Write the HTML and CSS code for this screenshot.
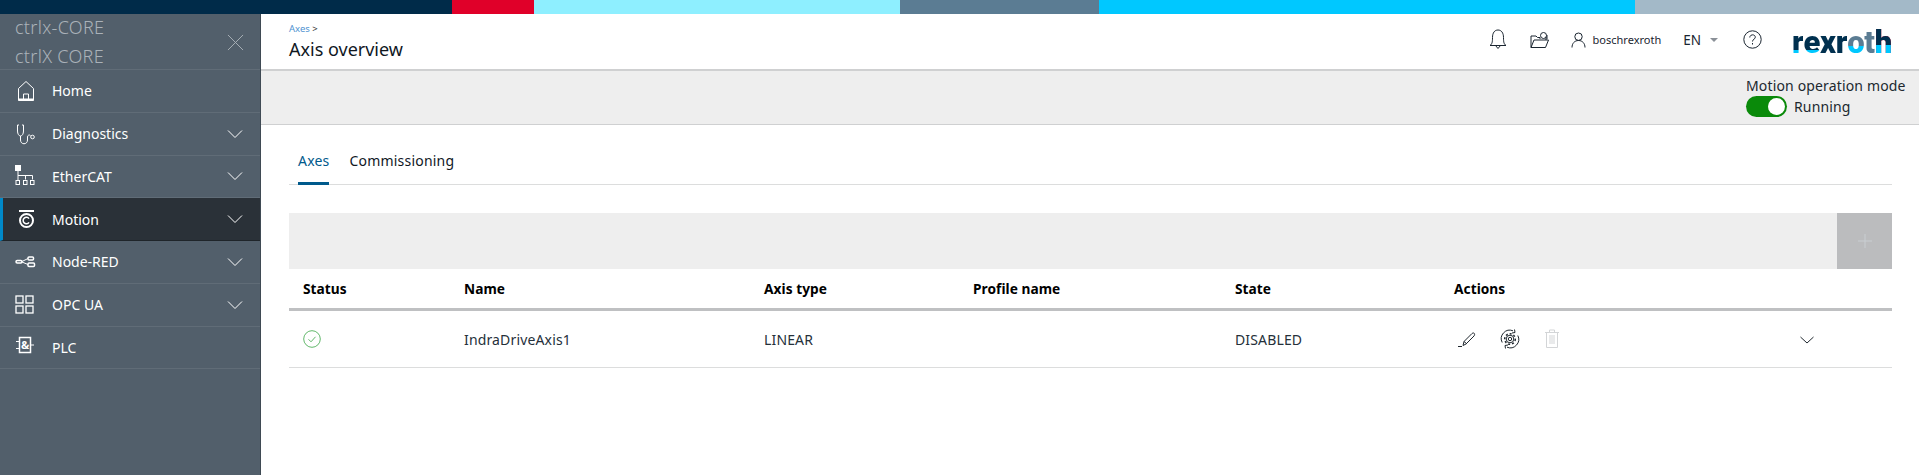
FILE: index.html
```html
<!DOCTYPE html>
<html lang="en">
<head>
<meta charset="utf-8">
<title>Axis overview</title>
<link rel="stylesheet" href="styles.css">
</head>
<body>
<div class="brandbar">
  <span class="seg s1"></span><span class="seg s2"></span><span class="seg s3"></span><span class="seg s4"></span><span class="seg s5"></span><span class="seg s6"></span>
</div>
<div class="app">
  <aside class="sidebar">
    <div class="device">
      <div class="device-names"><div>ctrlx-CORE</div><div>ctrlX CORE</div></div>
      <svg class="close" viewBox="0 0 18 18"><path d="M1 1l16 16M17 1L1 17"/></svg>
    </div>
    <nav>
      <a class="nav-item">
        <svg class="nav-icon" viewBox="0 0 22 22"><path d="M3.500 20.500V8.500L11 1.500l7.500 7v12zM8.500 20v-6h5v6"/><path class="thick" d="M3.500 19.500h15"/></svg>
        <span class="nav-label">Home</span>
      </a>
      <a class="nav-item">
        <svg class="nav-icon" viewBox="0 0 22 22"><path d="M4 2H2.500v6c0 3 1.500 5 3 5s3-2 3-5V2H7M5.500 13v4c0 5 7 5 7 0v-3c0-2 2-2.500 3-1.500"/><circle cx="17.500" cy="14" r="1.800"/></svg>
        <span class="nav-label">Diagnostics</span>
        <svg class="chev" viewBox="0 0 16 10"><path d="M1 1.500l7 7 7-7"/></svg>
      </a>
      <a class="nav-item">
        <svg class="nav-icon" viewBox="0 0 22 22"><rect class="solid" x="0.500" y="0.500" width="5" height="5"/><path d="M3 6v9M3 10.500h14.500v4M10.500 10.500v4"/><rect x="1" y="15.500" width="3.500" height="4"/><rect x="8.500" y="15.500" width="3.500" height="4"/><rect x="15.500" y="15.500" width="3.500" height="4"/></svg>
        <span class="nav-label">EtherCAT</span>
        <svg class="chev" viewBox="0 0 16 10"><path d="M1 1.500l7 7 7-7"/></svg>
      </a>
      <a class="nav-item active">
        <svg class="nav-icon" viewBox="0 0 22 22"><path class="thick" d="M4 3h15"/><circle class="thick" cx="11.500" cy="12.500" r="6.500"/><path class="mid" d="M14 10.700a3.200 3.200 0 1 0 0 3.600"/></svg>
        <span class="nav-label">Motion</span>
        <svg class="chev" viewBox="0 0 16 10"><path d="M1 1.500l7 7 7-7"/></svg>
      </a>
      <a class="nav-item">
        <svg class="nav-icon" viewBox="0 0 22 22"><rect class="mid" x="1" y="9.500" width="6" height="2.500" rx="1.200"/><path d="M7 10.500l6-3M7 11l6 2.500"/><rect class="mid" x="13" y="6" width="5.500" height="3" rx="1"/><rect class="mid" x="13" y="12" width="6.500" height="3.500" rx="1"/></svg>
        <span class="nav-label">Node-RED</span>
        <svg class="chev" viewBox="0 0 16 10"><path d="M1 1.500l7 7 7-7"/></svg>
      </a>
      <a class="nav-item">
        <svg class="nav-icon grid-ico" viewBox="0 0 22 22"><rect x="1" y="2" width="7" height="7"/><rect x="11" y="2" width="7" height="7"/><rect x="1" y="12" width="7" height="7"/><rect x="11" y="12" width="7" height="7"/></svg>
        <span class="nav-label">OPC UA</span>
        <svg class="chev" viewBox="0 0 16 10"><path d="M1 1.500l7 7 7-7"/></svg>
      </a>
      <a class="nav-item">
        <svg class="nav-icon" viewBox="0 0 22 22"><rect class="mid" x="4.500" y="1.500" width="11" height="15"/><path d="M1 5.500h3.500M1 12.500h3.500M15.500 9H19"/><text class="amp" x="10" y="12.500">&amp;</text></svg>
        <span class="nav-label">PLC</span>
      </a>
    </nav>
  </aside>
  <main class="main">
    <header class="topbar">
      <div class="titles">
        <div class="crumb"><span class="crumb-link">Axes</span> &gt;</div>
        <h1 class="title">Axis overview</h1>
      </div>
      <div class="tools">
        <svg class="tool bell" viewBox="0 0 18 21"><path d="M1 16.500c2-1.500 2.500-3 2.500-8C3.500 4 5.500 1 9 1s5.500 3 5.500 7.500c0 5 .5 6.500 2.500 8zM6.500 16.500L9 19.500l2.500-3"/></svg>
        <svg class="tool folder" viewBox="0 0 19 18"><path d="M1 16.500V5h5l1.500 1.500H10M1 16.500h14.500l3-7.500H4zM16 9V6"/><circle cx="13.500" cy="4.500" r="3"/><path d="M10 8V6.500M17 8V4"/></svg>
        <svg class="tool user" viewBox="0 0 15 16"><circle cx="7.500" cy="4.700" r="3.700"/><path d="M1 15.500c0-4 2.500-7 6.500-7s6.500 3 6.500 7"/></svg>
        <span class="username">boschrexroth</span>
        <span class="lang">EN</span>
        <span class="caret"></span>
        <svg class="tool help" viewBox="0 0 19 19"><circle cx="9.500" cy="9.500" r="8.700"/><path d="M6.800 7.500c0-3.500 5.500-3.500 5.500-.3 0 2-2.800 2-2.800 4.300M9.500 13v1.500"/></svg>
        <div class="logo"><span class="l-c">r</span><span class="l-c">e</span><span class="l-d">x</span><span class="l-d">r</span><span class="l-o">o</span><span class="l-g">t</span><span class="l-r">h</span></div>
      </div>
    </header>
    <section class="modebar">
      <div class="mode">
        <div class="mode-label">Motion operation mode</div>
        <div class="mode-row"><span class="toggle"><span class="knob"></span></span><span class="mode-state">Running</span></div>
      </div>
    </section>
    <section class="content">
      <div class="tabs">
        <span class="tab tab-on">Axes</span>
        <span class="tab">Commissioning</span>
      </div>
      <div class="toolbar">
        <button class="add"><svg viewBox="0 0 14 14"><path d="M7 0v14M0 7h14"/></svg></button>
      </div>
      <div class="grid head">
        <div>Status</div><div>Name</div><div>Axis type</div><div>Profile name</div><div>State</div><div>Actions</div>
      </div>
      <div class="grid row">
        <div><svg class="status" viewBox="0 0 18 18"><circle cx="9" cy="9" r="8.300"/><path d="M5.500 9.300l2.500 2.500 4.500-5"/></svg></div>
        <div>IndraDriveAxis1</div>
        <div>LINEAR</div>
        <div></div>
        <div>DISABLED</div>
        <div class="actions">
          <svg class="act" viewBox="0 0 20 18"><path d="M0 16.500h4"/><path d="M5 15.500l1-4 8-8c2-1.500 3.500.5 2 2.500l-8 8zM6 11.500l3 2.500"/></svg>
          <svg class="act gear" viewBox="0 0 20 20"><path d="M2.200 13.500A8.500 8.500 0 0 1 13 1.800M17.800 6.500A8.500 8.500 0 0 1 7 18.200M14.500 0.500L15 3.500 12 4M5.500 19.500L5 16.500 8 16"/><circle class="teeth" cx="10" cy="10" r="5.300"/><circle cx="10" cy="10" r="3.800"/><circle cx="10" cy="10" r="1.700"/></svg>
          <svg class="act trash" viewBox="0 0 16 19"><path d="M1 3.500h14M5.500 3.500V1h5v2.500M2.500 3.500v15h11v-15M6 6v9M8 6v9M10 6v9"/></svg>
          <svg class="expand" viewBox="0 0 14 8"><path d="M.5 1l6.500 6 6.500-6"/></svg>
        </div>
      </div>
    </section>
  </main>
</div>
</body>
</html>
```
FILE: styles.css
```css
* { box-sizing: border-box; }
html, body { margin: 0; height: 100%; overflow: hidden; }
body {
  display: flex;
  flex-direction: column;
  font-family: "Noto Sans", "Open Sans", sans-serif;
  color: #1a2530;
  background: #fff;
}
svg { fill: none; stroke: currentColor; stroke-width: 1; display: block; flex: none; }

.brandbar { display: flex; height: 14px; flex: none; }
.seg { display: block; height: 100%; }
.s1 { width: 452px; background: #002b49; }
.s2 { width: 82px; background: #e00029; }
.s3 { width: 366px; background: #8eefff; }
.s4 { width: 199px; background: #5b7c93; }
.s5 { width: 536px; background: #00c8ff; }
.s6 { flex: 1; background: #a3b9c8; }

.app { display: flex; flex: 1; min-height: 0; }

.sidebar {
  width: 261px;
  flex: none;
  background: #525f6b;
  color: #fff;
  border-right: 1px solid #3f4a54;
}
.device {
  height: 56px;
  display: flex;
  align-items: center;
  justify-content: space-between;
  padding: 0 16px 0 15px;
  border-bottom: 1px solid #606c77;
}
.device-names { font-size: 18px; line-height: 29px; font-weight: 300; letter-spacing: .3px; color: #aab2b9; }
.close { width: 17px; height: 17px; color: #aab2b9; margin-top: 1px; }

.nav-item {
  display: flex;
  align-items: center;
  height: 42.75px;
  padding-left: 15px;
  padding-right: 17px;
  font-size: 14px;
  border-bottom: 1px solid #606c77;
}
.nav-item.active {
  background: #2a3138;
  border-left: 3px solid #0089c9;
  padding-left: 12px;
  border-bottom-color: #1f252a;
}
.nav-icon { width: 22px; height: 22px; color: #fff; }
.thick { stroke-width: 2; }
.mid { stroke-width: 1.500; }
.grid-ico { stroke-width: 1.300; }
.solid { fill: #fff; }
.amp { fill: #fff; stroke: none; font-size: 11px; font-weight: 700; text-anchor: middle; font-family: "Noto Sans", sans-serif; }
.nav-label { margin-left: 15px; flex: 1; }
.chev { width: 16px; height: 10px; }

.main { flex: 1; min-width: 0; display: flex; flex-direction: column; }

.topbar {
  height: 57px;
  flex: none;
  display: flex;
  justify-content: space-between;
  padding: 0 27px 0 28px;
  border-bottom: 2px solid #cfd0d1;
}
.crumb { font-size: 9.500px; line-height: 12px; margin-top: 9px; color: #333; }
.crumb-link { color: #4f93d1; }
.title { margin: 3px 0 0; font-size: 18px; line-height: 23px; font-weight: 400; color: #10181f; }
.tools { display: flex; align-items: center; padding-bottom: 4px; color: #1a2530; }
.tool { display: block; }
.bell { width: 18px; height: 21px; margin-right: 23px; }
.folder { width: 19px; height: 18px; margin-right: 22px; }
.user { width: 15px; height: 16px; margin-right: 7px; }
.username { font-size: 11px; margin-right: 22px; }
.lang { font-size: 13.500px; margin-right: 9px; }
.caret { width: 0; height: 0; border: 4px solid transparent; border-top: 4px solid #8a9097; border-bottom: 0; margin-right: 25px; }
.help { width: 19px; height: 19px; margin-right: 30px; }
.logo { display: flex; width: 100px; margin-top: 6px; font-family: "Roboto", sans-serif; font-weight: 900; font-size: 31px; line-height: 34px; letter-spacing: -.3px; }
.logo span { -webkit-background-clip: text; background-clip: text; color: transparent; }
.l-d { background-image: linear-gradient(#00304f, #00304f); }
.l-c { background-image: linear-gradient(#00304f 72%, #00c8ff 72%); }
.l-o { background-image: linear-gradient(#5b7c93 60%, #00c8ff 60%); }
.l-g { background-image: linear-gradient(#5b7c93, #5b7c93); }
.l-r { background-image: linear-gradient(#00304f 55%, #00c8ff 55%, #00c8ff 100%), linear-gradient(#e00029, #e00029); }

.modebar {
  height: 54px;
  flex: none;
  background: #eee;
  border-bottom: 1px solid #cfd0d1;
  display: flex;
  justify-content: flex-end;
  padding-right: 14px;
}
.mode { width: 159px; padding-top: 6px; font-size: 14px; letter-spacing: .15px; line-height: 18px; color: #20282f; white-space: nowrap; }
.mode-row { display: flex; align-items: center; gap: 7px; margin-top: 1px; }
.toggle { display: flex; align-items: center; justify-content: flex-end; width: 41px; height: 21px; padding-right: 2px; border-radius: 11px; background: #0a8a0a; }
.knob { width: 17px; height: 17px; border-radius: 50%; background: #fff; }

.content { flex: 1; padding: 0 27px 0 28px; }
.tabs { display: flex; height: 60px; align-items: flex-end; gap: 20px; border-bottom: 1px solid #dcdddd; padding-left: 9px; }
.tab { font-size: 14px; letter-spacing: .2px; height: 35px; line-height: 24px; color: #10181f; }
.tab-on { color: #005a8c; border-bottom: 3px solid #005a8c; margin-bottom: -1px; height: 36px; }

.toolbar { margin-top: 28px; height: 56px; background: #eee; display: flex; justify-content: flex-end; }
.add { width: 55px; height: 56px; padding: 0; border: 0; background: #bbbcbe; display: flex; align-items: center; justify-content: center; color: #c9ced2; }
.add svg { width: 14px; height: 14px; }

.grid { display: grid; grid-template-columns: 161px 300px 209px 262px 219px 1fr; align-items: center; }
.grid > div { padding-left: 14px; }
.head { height: 42px; font-size: 13.700px; font-weight: 700; letter-spacing: .05px; color: #000; border-bottom: 3px solid #bfc0c2; }
.row { height: 57px; font-size: 14px; letter-spacing: .15px; color: #25303a; border-bottom: 1px solid #dcdddd; }
.status { width: 18px; height: 18px; color: #62b86b; }
.actions { display: flex; align-items: center; }
.act { width: 20px; height: 18px; color: #20282f; margin-left: 4px; }
.gear { height: 20px; margin-left: 22px; }
.teeth { stroke-dasharray: 2 2; stroke-width: 1.500; }
.trash { width: 16px; height: 19px; margin-left: 24px; margin-top: -2px; color: #d3d5d7; }
.expand { width: 14px; height: 8px; margin-left: 240px; margin-top: 1px; color: #20282f; }
```
